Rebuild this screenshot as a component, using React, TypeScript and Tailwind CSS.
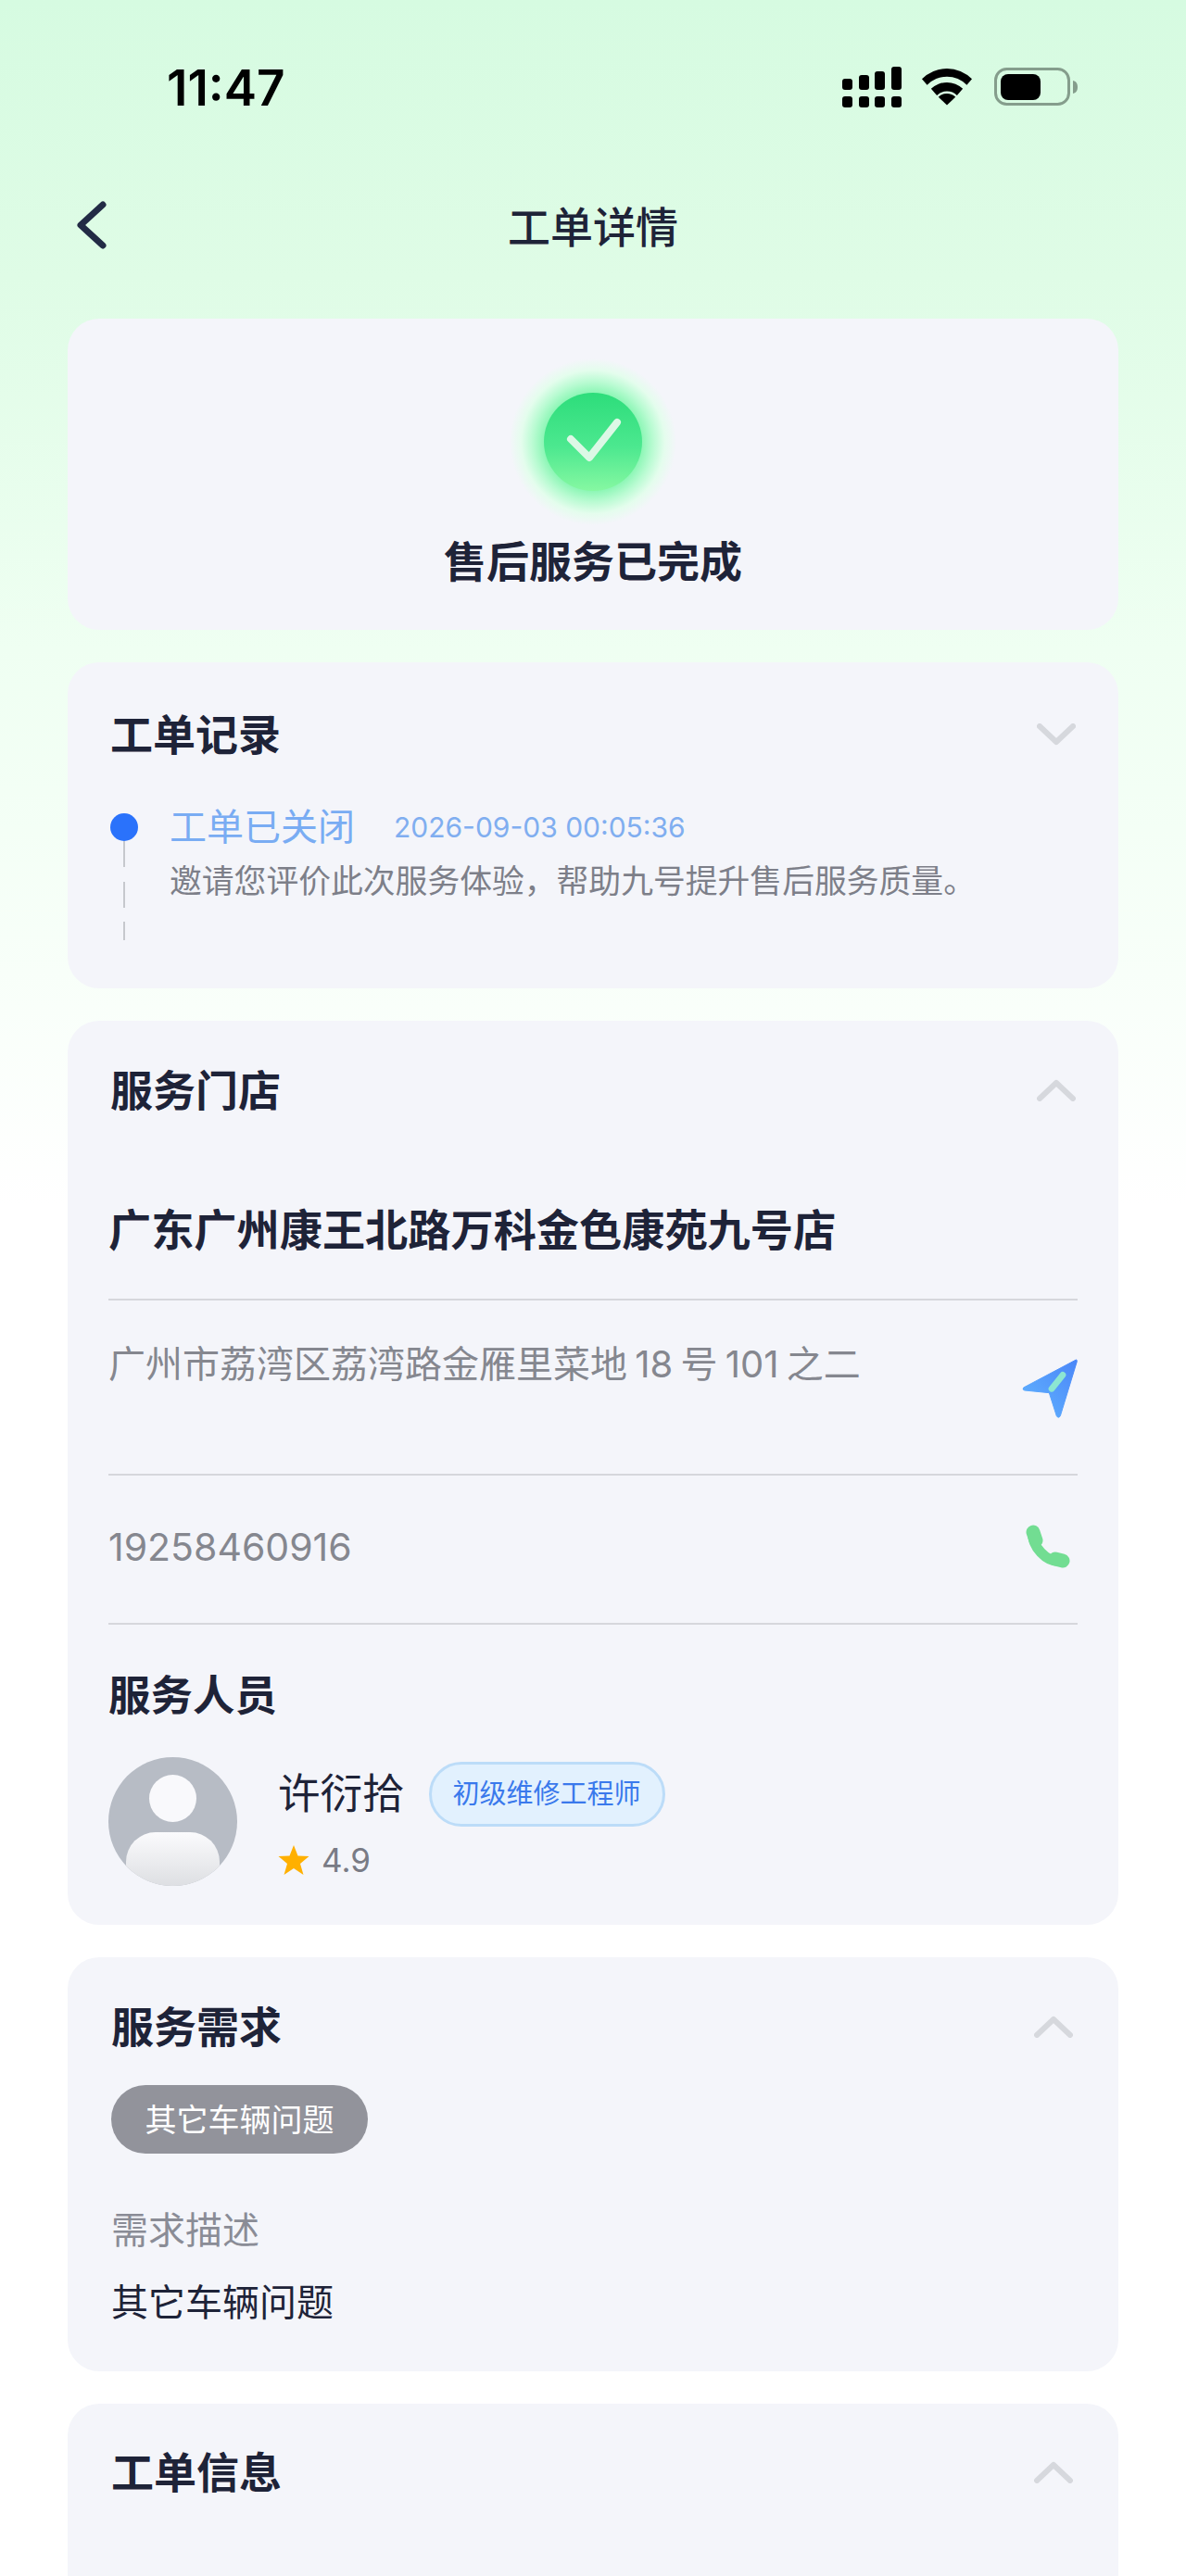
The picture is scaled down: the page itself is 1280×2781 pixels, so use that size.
import React from 'react';

const Chevron = ({ up }: { up?: boolean }) => (
  <svg width="42" height="24" viewBox="0 0 42 24" fill="none" className="shrink-0">
    <path
      d={up ? 'M3 21 L21 4 L39 21' : 'M3 3 L21 20 L39 3'}
      stroke="#d6d8dd"
      strokeWidth="6"
      strokeLinecap="round"
      strokeLinejoin="round"
    />
  </svg>
);

const Card = ({ className, children }: { className?: string; children: React.ReactNode }) => (
  <section className={`rounded-[34px] bg-[#f4f5fa] ${className ?? ''}`}>{children}</section>
);

const CardHead = ({ title, up, className }: { title: string; up?: boolean; className?: string }) => (
  <div className={`flex h-[60px] items-center justify-between ${className ?? 'px-[2px]'}`}>
    <h2 className="text-[46px] leading-[60px] font-semibold text-[#1e2338]">{title}</h2>
    <Chevron up={up} />
  </div>
);

const Divider = () => <div className="h-[2px] bg-[#d6d7dc]" />;

const StatusBar = () => (
  <div className="flex h-[190px] items-start justify-between pt-[65px] pr-[117px] pl-[180px]">
    <span className="text-[53px] leading-[60px] font-semibold text-black">11:47</span>
    <div className="flex items-start pt-[7px]">
      <svg width="64" height="44" viewBox="0 0 64 44" fill="#000">
        <rect x="0" y="13" width="11" height="12" rx="3" />
        <rect x="18" y="9" width="11" height="16" rx="3" />
        <rect x="35" y="5" width="11" height="20" rx="3" />
        <rect x="53" y="0" width="11" height="25" rx="3" />
        <rect x="0" y="32" width="11" height="12" rx="3" />
        <rect x="18" y="32" width="11" height="12" rx="3" />
        <rect x="35" y="32" width="11" height="12" rx="3" />
        <rect x="53" y="32" width="11" height="12" rx="3" />
      </svg>
      <svg width="56" height="42" viewBox="0 0 170 125" fill="#000" className="mt-[1px] ml-[21px]">
        <path d="M3 36 A115 115 0 0 1 167 36 L150 56 A90 90 0 0 0 20 56 Z" />
        <path d="M33 68 A75 75 0 0 1 137 68 L118 90 A47 47 0 0 0 52 90 Z" />
        <path d="M85 122 L57 95 A40 40 0 0 1 113 95 Z" />
      </svg>
      <svg width="90" height="42" viewBox="0 0 90 42" fill="none" className="mt-[1px] ml-[23px]">
        <rect x="1.5" y="1.5" width="79" height="38" rx="12" stroke="#859d8c" strokeWidth="3" />
        <rect x="7" y="7" width="43" height="28" rx="8" fill="#000" />
        <path d="M85 14 C89 15 90 18 90 21 C90 24 89 27 85 28 Z" fill="#859d8c" />
      </svg>
    </div>
  </div>
);

const NavBar = () => (
  <div className="relative flex h-[110px] items-center justify-center">
    <svg width="36" height="52" viewBox="0 0 36 52" fill="none" className="absolute top-[27px] left-[80px]">
      <path d="M31 4 L7 26 L31 48" stroke="#222b45" strokeWidth="7" strokeLinecap="round" strokeLinejoin="round" />
    </svg>
    <h1 className="text-[46px] leading-[60px] font-medium text-[#1e2338]">工单详情</h1>
  </div>
);

const CheckBadge = () => (
  <svg width="180" height="180" viewBox="0 0 180 180">
    <defs>
      <radialGradient id="glow" cx="50%" cy="50%" r="50%">
        <stop offset="58%" stopColor="#8af6b4" />
        <stop offset="72%" stopColor="#b9fbd2" />
        <stop offset="86%" stopColor="#e4fded" />
        <stop offset="100%" stopColor="#f4f5fa" />
      </radialGradient>
      <linearGradient id="disc" x1="0" y1="0" x2="0" y2="1">
        <stop offset="0%" stopColor="#2ddd7b" />
        <stop offset="55%" stopColor="#4ce88f" />
        <stop offset="100%" stopColor="#86f8a2" />
      </linearGradient>
    </defs>
    <circle cx="90" cy="90" r="90" fill="url(#glow)" />
    <circle cx="90" cy="90" r="53" fill="url(#disc)" />
    <path d="M66 87 L86 107 L116 69" fill="none" stroke="#dcf8e6" strokeWidth="8" strokeLinecap="round" strokeLinejoin="round" />
  </svg>
);

const TimelineRail = () => (
  <div className="flex w-[30px] shrink-0 flex-col items-center">
    <div className="size-[30px] rounded-full bg-[#2a72fb]" />
    <div className="h-[28px] w-[2px] bg-[#c6c8cd]" />
    <div className="mt-[16px] h-[28px] w-[2px] bg-[#c6c8cd]" />
    <div className="mt-[15px] h-[20px] w-[2px] bg-[#c6c8cd]" />
  </div>
);

const NavArrow = () => (
  <svg width="60" height="64" viewBox="0 0 180 192">
    <defs>
      <linearGradient id="arrow" x1="1" y1="0" x2="0" y2="1">
        <stop offset="0%" stopColor="#4a86f8" />
        <stop offset="100%" stopColor="#62b5ff" />
      </linearGradient>
    </defs>
    <path
      d="M175 3 L5 93 Q0 100 8 102 L88 110 L112 185 Q118 194 124 185 L178 8 Q178 2 175 3 Z"
      fill="url(#arrow)"
      stroke="url(#arrow)"
      strokeWidth="3"
      strokeLinejoin="round"
    />
    <path d="M132 52 L96 97" stroke="#8ce6d2" strokeWidth="20" strokeLinecap="round" />
  </svg>
);

const PhoneIcon = () => (
  <svg width="48" height="48" viewBox="0 0 48 48" fill="none">
    <path d="M8 9 C6 22 22 42 39 39" stroke="#72dd92" strokeWidth="11" strokeLinecap="round" />
    <path d="M8 8 L11 17" stroke="#72dd92" strokeWidth="15" strokeLinecap="round" />
    <path d="M32 37 L40 39" stroke="#72dd92" strokeWidth="15" strokeLinecap="round" />
  </svg>
);

const Avatar = () => (
  <svg width="139" height="139" viewBox="0 0 139 139" className="shrink-0">
    <defs>
      <clipPath id="round">
        <circle cx="69.5" cy="69.5" r="69.5" />
      </clipPath>
      <linearGradient id="body" x1="0" y1="0" x2="0" y2="1">
        <stop offset="0%" stopColor="#fbfbfd" />
        <stop offset="100%" stopColor="#d7d9dd" />
      </linearGradient>
    </defs>
    <circle cx="69.5" cy="69.5" r="69.5" fill="#b7bcc5" />
    <circle cx="69.5" cy="44.5" r="25.5" fill="#f9f9fc" />
    <g clipPath="url(#round)">
      <rect x="19" y="81" width="101" height="70" rx="32" fill="url(#body)" />
    </g>
  </svg>
);

const StarIcon = () => (
  <svg width="34" height="32" viewBox="0 0 34 32" fill="#ffb000">
    <path d="M17 0 L21.5 11.5 L33.5 12 L24 20 L27.5 32 L17 25 L6.5 32 L10 20 L0.5 12 L12.5 11.5 Z" />
  </svg>
);

const App: React.FC = () => {
  return (
    <div className="h-[2781px] overflow-hidden bg-[linear-gradient(180deg,#d6fbe1_0px,#dffce6_300px,#effff2_700px,#f8fff9_1050px,#ffffff_1300px)] font-['Inter','Noto_Sans_CJK_SC',sans-serif]">
      <StatusBar />
      <NavBar />

      <main className="mt-[44px] flex flex-col gap-[35px] px-[73px]">
        <Card className="flex h-[336px] flex-col items-center pt-[43px]">
          <CheckBadge />
          <p className="mt-[9px] text-[46px] leading-[60px] font-semibold text-[#1e2338]">售后服务已完成</p>
        </Card>

        <Card className="h-[352px] px-[44px] pt-[48px]">
          <CardHead title="工单记录" />
          <div className="mt-[55px] flex gap-[34px] pl-[2px]">
            <TimelineRail />
            <div className="min-w-0">
              <div className="flex h-[30px] items-center gap-[42px]">
                <span className="text-[40px] leading-[30px] text-[#79acf3]">工单已关闭</span>
                <span className="text-[30px] leading-[30px] text-[#80aef0]">2026-09-03 00:05:36</span>
              </div>
              <p className="mt-[18px] text-[34.8px] leading-[50px] text-[#7d7f89]">
                邀请您评价此次服务体验，帮助九号提升售后服务质量。
              </p>
            </div>
          </div>
        </Card>

        <Card className="px-[44px] pt-[45px] pb-[42px]">
          <CardHead title="服务门店" up />
          <p className="mt-[91px] text-[46.2px] leading-[60px] font-semibold text-[#1e2338]">广东广州康王北路万科金色康苑九号店</p>
          <div className="mt-[44px]">
            <Divider />
          </div>
          <div className="flex h-[187px] items-start justify-between pt-[39px]">
            <p className="text-[40px] leading-[60px] text-[#85878f] [word-spacing:-3px]">广州市荔湾区荔湾路金雁里菜地 18 号 101 之二</p>
            <div className="mt-[24px]">
              <NavArrow />
            </div>
          </div>
          <Divider />
          <div className="flex h-[159px] items-center justify-between pr-[8px] pb-[5px]">
            <span className="text-[41px] leading-[60px] text-[#85878f]">19258460916</span>
            <PhoneIcon />
          </div>
          <Divider />
          <p className="mt-[47px] text-[45.5px] leading-[60px] font-semibold text-[#1e2338]">服务人员</p>
          <div className="mt-[36px] flex gap-[44px]">
            <Avatar />
            <div>
              <div className="mt-[5px] flex items-center gap-[26px]">
                <span className="text-[45.5px] leading-[60px] text-[#1e2338]">许衍拾</span>
                <span className="flex h-[70px] w-[255px] items-center justify-center rounded-full border-[3px] border-[#bcdcf8] bg-[#e2f1fe] text-[29px] text-[#3a79ec]">
                  初级维修工程师
                </span>
              </div>
              <div className="mt-[18px] flex items-center gap-[13px]">
                <StarIcon />
                <span className="text-[35px] leading-[36px] text-[#797b85]">4.9</span>
              </div>
            </div>
          </div>
        </Card>

        <Card className="h-[447px] px-[47px] pt-[45px]">
          <CardHead title="服务需求" up className="pr-[2px]" />
          <div className="mt-[33px] flex h-[74px] w-[277px] items-center justify-center rounded-full bg-[#92939b] text-[34px] text-white">
            其它车辆问题
          </div>
          <p className="mt-[53px] text-[40px] leading-[60px] text-[#8a8c96]">需求描述</p>
          <p className="mt-[18px] text-[40px] leading-[60px] text-[#1e2338]">其它车辆问题</p>
        </Card>

        <Card className="h-[400px] px-[47px] pt-[44px]">
          <CardHead title="工单信息" up className="pr-[2px]" />
        </Card>
      </main>
    </div>
  );
};

export default App;
